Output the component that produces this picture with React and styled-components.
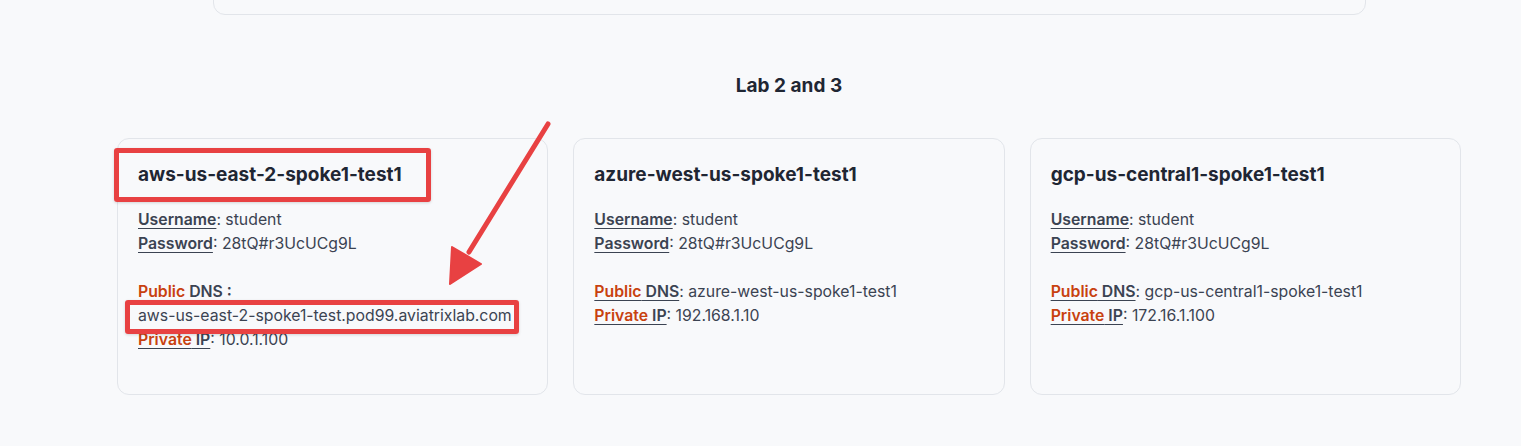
import React from 'react';
import styled, { createGlobalStyle } from 'styled-components';

const GlobalStyle = createGlobalStyle`
  html, body {
    margin: 0;
    padding: 0;
    background: #f8f9fb;
  }
  body {
    font-family: Inter, "Noto Sans", "Liberation Sans", sans-serif;
    color: #1f2633;
    -webkit-font-smoothing: antialiased;
  }
`;

const labs = [
  {
    name: 'aws-us-east-2-spoke1-test1',
    dns: 'aws-us-east-2-spoke1-test.pod99.aviatrixlab.com',
    ip: '10.0.1.100',
    annotated: true,
  },
  {
    name: 'azure-west-us-spoke1-test1',
    dns: 'azure-west-us-spoke1-test1',
    ip: '192.168.1.10',
  },
  {
    name: 'gcp-us-central1-spoke1-test1',
    dns: 'gcp-us-central1-spoke1-test1',
    ip: '172.16.1.100',
  },
];

const App = () => {
  return (
    <>
      <GlobalStyle />
      <StyledPage>
        <StyledTopCard />
        <StyledSectionTitle>Lab 2 and 3</StyledSectionTitle>
        <StyledGridWrapper>
          <StyledGrid>
            {labs.map((lab) => (
              <StyledCard key={lab.name}>
                <StyledHeading>{lab.name}</StyledHeading>
                {lab.annotated && <StyledHeadingBox />}
                <StyledLine>
                  <StyledLabel>Username</StyledLabel>: student
                </StyledLine>
                <StyledLine>
                  <StyledLabel>Password</StyledLabel>: 28tQ#r3UcUCg9L
                </StyledLine>
                <StyledSpacer />
                {lab.annotated ? (
                  <>
                    <StyledLine>
                      <StyledLabel>
                        <StyledAccent>Public</StyledAccent> DNS{' '}
                      </StyledLabel>
                      <StyledColon>:</StyledColon>
                    </StyledLine>
                    <StyledLine>
                      <StyledHighlight>{lab.dns}</StyledHighlight>
                    </StyledLine>
                  </>
                ) : (
                  <StyledLine>
                    <StyledLabel>
                      <StyledAccent>Public</StyledAccent> DNS
                    </StyledLabel>
                    : {lab.dns}
                  </StyledLine>
                )}
                <StyledLine>
                  <StyledLabel>
                    <StyledAccent>Private</StyledAccent> IP
                  </StyledLabel>
                  : {lab.ip}
                </StyledLine>
              </StyledCard>
            ))}
          </StyledGrid>
          {/* annotation arrow pointing at the DNS value */}
          <StyledArrow viewBox="0 0 120 175" width="120" height="175">
            <line x1="111" y1="6" x2="32" y2="134" stroke="#e84142" strokeWidth="5" strokeLinecap="round" />
            <polygon points="13,166 15,129 44,146" fill="#e84142" stroke="#e84142" strokeWidth="2" strokeLinejoin="round" />
          </StyledArrow>
        </StyledGridWrapper>
      </StyledPage>
    </>
  );
};

const StyledPage = styled.div`
  width: 1344px;
  margin-left: 117px;
  display: flex;
  flex-direction: column;
`;

const StyledTopCard = styled.div`
  width: 1151px;
  height: 40px;
  margin: -27px 0 0 96px;
  border: 1px solid #e2e5ea;
  border-radius: 12px;
  background: #f8f9fb;
`;

const StyledSectionTitle = styled.h2`
  margin: 57px 0 0;
  text-align: center;
  font-size: 19px;
  line-height: 28px;
  font-weight: 700;
  color: #1f2633;
`;

const StyledGridWrapper = styled.div`
  position: relative;
  margin-top: 38px;
`;

const StyledGrid = styled.div`
  display: grid;
  grid-template-columns: repeat(3, 1fr);
  gap: 25px;
`;

const StyledCard = styled.div`
  position: relative;
  min-height: 257px;
  box-sizing: border-box;
  padding: 22px 20px 20px;
  border: 1px solid #e2e5ea;
  border-radius: 12px;
  background: #f8f9fb;
  font-size: 15.8px;
  line-height: 24px;
  color: #3b4352;
`;

const StyledHeading = styled.h3`
  margin: 0 0 19px;
  font-size: 19px;
  line-height: 28px;
  font-weight: 700;
  color: #1f2633;
`;

const StyledHeadingBox = styled.div`
  position: absolute;
  left: -4px;
  top: 9px;
  width: 317px;
  height: 54px;
  box-sizing: border-box;
  border: 5px solid #e84142;
  border-radius: 3px;
  box-shadow: 0 1px 3px rgba(0, 0, 0, 0.15);
`;

const StyledLine = styled.div`
  white-space: pre;
`;

const StyledSpacer = styled.div`
  height: 24px;
`;

const StyledLabel = styled.span`
  font-weight: 600;
  color: #3b4352;
  text-decoration: underline;
  text-underline-offset: 3px;
`;

const StyledColon = styled.span`
  font-weight: 600;
`;

const StyledAccent = styled.span`
  color: #c8410f;
`;

const StyledHighlight = styled.span`
  position: relative;

  &::after {
    content: '';
    position: absolute;
    left: -13px;
    right: -7px;
    top: -6px;
    bottom: -9px;
    border: 5px solid #e84142;
    border-radius: 3px;
    box-shadow: 0 1px 3px rgba(0, 0, 0, 0.15);
  }
`;

const StyledArrow = styled.svg`
  position: absolute;
  left: 320px;
  top: -20px;
  pointer-events: none;
`;

export default App;
